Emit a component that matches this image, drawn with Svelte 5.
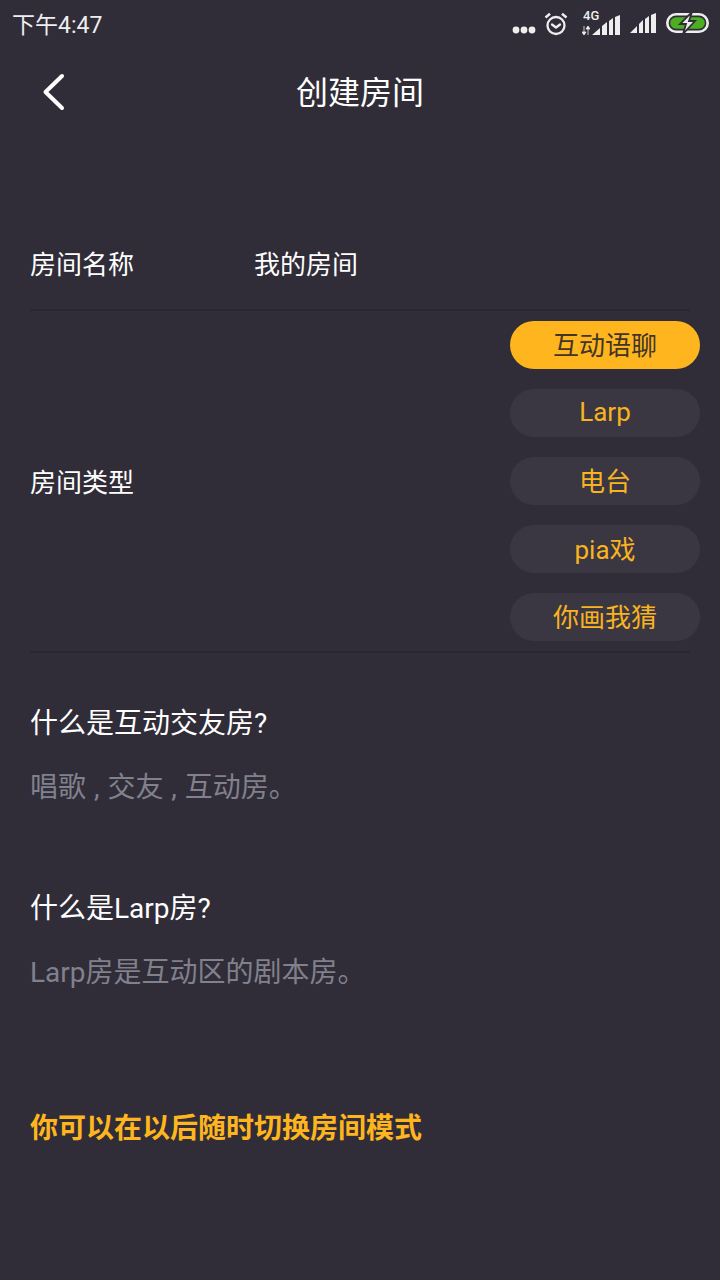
<script>
  // room types shown on the right of the form
  const roomTypes = ['互动语聊', 'Larp', '电台', 'pia戏', '你画我猜'];
  let selected = $state(0);

  const help = [
    { q: '什么是互动交友房?', a: '唱歌 , 交友 , 互动房。' },
    { q: '什么是Larp房?', a: 'Larp房是互动区的剧本房。' }
  ];
</script>

<div class="page">
  <div class="status">
    <span class="time">下午4:47</span>
    <div class="status-icons">
      <svg class="dots" width="24" height="8" viewBox="0 0 24 8"><circle cx="4" cy="4" r="3.4" /><circle cx="12" cy="4" r="3.4" /><circle cx="20" cy="4" r="3.4" /></svg>
      <svg class="alarm" width="24" height="24" viewBox="0 0 24 24" fill="none" stroke="#eee" stroke-width="2.300">
        <circle cx="12" cy="13.500" r="8.500" />
        <path d="M8 12.500l4 3 4-3" stroke-linecap="round" stroke-linejoin="round" />
        <path d="M1.500 5.500L6 1.800M22.500 5.500L18 1.800" stroke-width="2.500" />
      </svg>
      <div class="net">
        <span class="g4">4G</span>
        <svg class="arrows" width="8" height="9" viewBox="0 0 8 9"><path d="M2 0v8M0 6l2 3 2-3zM6 9V1M4 3l2-3 2 3z" stroke="#eee" stroke-width="0.800" fill="#eee" /></svg>
        <svg width="28" height="20" viewBox="0 0 28 20"><path d="M0 20l8-7v7zM10 11l5-4v13h-5zM17 6l4-3v17h-4zM23 2l5-2v20h-5z" /></svg>
      </div>
      <svg width="26" height="20" viewBox="0 0 26 20"><path d="M0 20l7-7v7zM9 11l4-4v13H9zM15 6l4-3v17h-4zM21 2l5-2v20h-5z" /></svg>
      <svg class="battery" width="43" height="20" viewBox="0 0 43 20">
        <rect x="1.300" y="1.300" width="40.400" height="17.400" rx="8.700" fill="none" stroke="#eee" stroke-width="2.600" />
        <rect x="4.200" y="4.200" width="34.600" height="11.600" rx="5.800" fill="#4caf22" />
        <path d="M26 -1L14 11h6l-3 10 12-13h-6z" fill="#eee" stroke="#302d38" stroke-width="1.800" />
      </svg>
    </div>
  </div>

  <header class="nav">
    <svg class="back" width="24" height="38" viewBox="0 0 24 38" fill="none" stroke="#fff" stroke-width="4" stroke-linecap="round" stroke-linejoin="round"><path d="M20 3L3.500 19 20 35" /></svg>
    <h1>创建房间</h1>
  </header>

  <section class="form">
    <div class="row name-row">
      <span class="label">房间名称</span>
      <span class="value">我的房间</span>
    </div>
    <div class="row type-row">
      <span class="label type-label">房间类型</span>
      <div class="pills">
        {#each roomTypes as type, i}
          <button class="pill" class:active={selected === i} onclick={() => (selected = i)}>{type}</button>
        {/each}
      </div>
    </div>
  </section>

  <section class="help">
    {#each help as item}
      <div class="help-item">
        <h2>{item.q}</h2>
        <p>{item.a}</p>
      </div>
    {/each}
  </section>

  <p class="notice">你可以在以后随时切换房间模式</p>
</div>

<style>
  :global(body) {
    background: #302d38;
  }

  .page {
    width: 720px;
    height: 1280px;
    overflow: hidden;
    background: #302d38;
    color: #fff;
    font-family: Roboto, "Noto Sans CJK SC", sans-serif;
    box-sizing: border-box;
  }

  .status {
    height: 50px;
    box-sizing: border-box;
    padding: 0 11px 4px 12px;
    display: flex;
    align-items: center;
    justify-content: space-between;
  }

  .time {
    font-size: 23px;
    color: #eee;
  }

  .status-icons {
    display: flex;
    align-items: center;
    gap: 10px;
    fill: #eee;
  }

  .dots {
    margin-top: 14px;
    margin-right: -2px;
  }

  .alarm {
    margin-top: 2px;
  }

  .net {
    display: flex;
    align-items: flex-end;
    position: relative;
    height: 24px;
    width: 38px;
    margin-left: 4px;
    justify-content: flex-end;
  }

  .g4 {
    position: absolute;
    left: 1px;
    top: -3px;
    font-size: 13px;
    font-weight: 500;
    color: #eee;
  }

  .arrows {
    position: absolute;
    left: 0;
    bottom: 0;
  }

  .nav {
    height: 84px;
    position: relative;
    display: flex;
    align-items: center;
    justify-content: center;
  }

  .back {
    position: absolute;
    left: 42px;
    top: 23px;
  }

  h1 {
    margin: 0 0 4px;
    font-size: 32px;
    font-weight: 400;
  }

  .form {
    margin: 84px 30px 0;
  }

  .row {
    display: flex;
    align-items: center;
    font-size: 26px;
    border-bottom: 2px solid #2a2730;
  }

  .name-row {
    height: 93px;
    box-sizing: border-box;
    padding-bottom: 3px;
  }

  .label {
    width: 224px;
  }

  .type-label {
    margin-bottom: 2px;
  }

  .type-row {
    justify-content: space-between;
    padding: 10px 0;
  }

  .pills {
    display: flex;
    flex-direction: column;
    gap: 20px;
    margin-right: -10px;
  }

  .pill {
    width: 190px;
    height: 48px;
    border: none;
    border-radius: 24px;
    padding: 0 0 3px;
    background: #3a3742;
    color: #f8b320;
    font: inherit;
    font-size: 26px;
  }

  .pill.active {
    background: #ffb61e;
    color: #413528;
  }

  .help {
    margin: 0 30px;
    padding-top: 51px;
    display: flex;
    flex-direction: column;
    gap: 81px;
  }

  h2 {
    margin: 0;
    font-size: 28px;
    font-weight: 400;
    line-height: 40px;
  }

  .help-item p {
    margin: 24px 0 0;
    font-size: 28px;
    line-height: 40px;
    word-spacing: 1px;
    color: #80818d;
  }

  .notice {
    margin: 116px 30px 0;
    font-size: 28px;
    line-height: 40px;
    font-weight: 700;
    color: #ffb61e;
  }
</style>
